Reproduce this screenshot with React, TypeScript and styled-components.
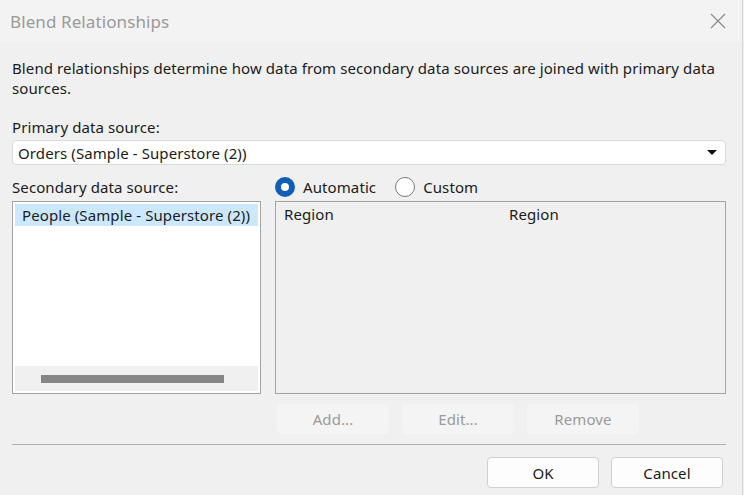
import React from 'react';
import styled, { createGlobalStyle } from 'styled-components';

const GlobalStyle = createGlobalStyle`
  html, body {
    margin: 0;
    padding: 0;
    background: #f0f0f0;
  }
  body {
    font-family: "Noto Sans", "DejaVu Sans", sans-serif;
    font-size: 15px;
    letter-spacing: 0.1px;
    color: #1b1b1b;
  }
  * {
    box-sizing: border-box;
  }
`;

const Window = styled.div`
  width: 743px;
  height: 495px;
  background: #f0f0f0;
  border-right: 1px solid #d6d6d6;
  display: flex;
  flex-direction: column;
  overflow: hidden;
`;

const TitleBar = styled.div`
  height: 42px;
  background: #f3f3f3;
  display: flex;
  align-items: center;
  justify-content: space-between;
  padding: 0 14px 0 10px;
`;

const Title = styled.div`
  font-size: 17px;
  color: #9a9a9a;
`;

const CloseButton = styled.div`
  width: 20px;
  height: 20px;
  display: flex;
  align-items: center;
  justify-content: center;
`;

const Body = styled.div`
  padding: 16px 16px 0 12px;
  display: flex;
  flex-direction: column;
`;

const Description = styled.p`
  margin: 0;
  line-height: 20px;
`;

const Label = styled.div`
  line-height: 20px;
`;

const PrimaryLabel = styled(Label)`
  margin-top: 19px;
`;

const Combo = styled.div`
  margin-top: 3px;
  height: 25px;
  background: #fff;
  border: 1px solid #d9d9d9;
  border-radius: 4px;
  display: flex;
  align-items: center;
  justify-content: space-between;
  padding: 0 8px 0 5px;
`;

const Arrow = styled.div`
  width: 0;
  height: 0;
  border-left: 5px solid transparent;
  border-right: 5px solid transparent;
  border-top: 5px solid #111;
`;

const Columns = styled.div`
  margin-top: 12px;
  display: grid;
  grid-template-columns: 249px 451px;
  column-gap: 14px;
`;

const Column = styled.div`
  display: flex;
  flex-direction: column;
`;

const ListBox = styled.div`
  margin-top: 4px;
  height: 193px;
  border: 1px solid #a3a3a3;
  background: #fff;
  display: flex;
  flex-direction: column;
  justify-content: space-between;
  padding: 2px;
`;

const ListItem = styled.div<{ selected?: boolean }>`
  height: 22px;
  line-height: 22px;
  padding-left: 7px;
  white-space: nowrap;
  overflow: hidden;
  background: ${(p) => (p.selected ? '#cce8ff' : 'transparent')};
`;

const HScroll = styled.div`
  height: 25px;
  background: #f0f0f0;
  display: flex;
  align-items: center;
  padding-left: 26px;
`;

const ScrollThumb = styled.div`
  width: 183px;
  height: 8px;
  background: #858585;
`;

const RadioRow = styled.div`
  display: flex;
  align-items: center;
  gap: 19px;
  height: 20px;
`;

const RadioOption = styled.label`
  display: flex;
  align-items: center;
  gap: 8px;
`;

const RadioCircle = styled.span<{ checked?: boolean }>`
  width: 20px;
  height: 20px;
  border-radius: 50%;
  background: #fff;
  border: ${(p) => (p.checked ? '6px solid #0e5fb5' : '1px solid #7a7a7a')};
`;

const MappingBox = styled.div`
  margin-top: 4px;
  height: 193px;
  border: 1px solid #a3a3a3;
  background: #f0f0f0;
  padding: 1px 8px;
`;

const MappingRow = styled.div`
  display: grid;
  grid-template-columns: 225px 1fr;
  line-height: 22px;
`;

const ActionRow = styled.div`
  margin-top: 10px;
  display: flex;
  gap: 13px;
  padding-left: 2px;
`;

const ActionButton = styled.div`
  width: 112px;
  height: 30px;
  border-radius: 4px;
  background: #f4f4f4;
  color: #9a9a9a;
  display: flex;
  align-items: center;
  justify-content: center;
`;

const Separator = styled.hr`
  margin: 10px 0 0;
  border: none;
  border-top: 1px solid #b0b0b0;
  width: 714px;
`;

const Footer = styled.div`
  margin-top: 12px;
  display: flex;
  justify-content: flex-end;
  gap: 12px;
  padding-right: 3px;
`;

const DialogButton = styled.div`
  width: 112px;
  height: 31px;
  border-radius: 4px;
  background: #fdfdfd;
  border: 1px solid #d0d0d0;
  display: flex;
  align-items: center;
  justify-content: center;
`;

const App: React.FC = () => {
  return (
    <>
      <GlobalStyle />
      <Window>
        <TitleBar>
          <Title>Blend Relationships</Title>
          <CloseButton>
            <svg width="16" height="16" viewBox="0 0 16 16">
              <path d="M1 1 L15 15 M15 1 L1 15" stroke="#8a8a8a" strokeWidth="1.2" />
            </svg>
          </CloseButton>
        </TitleBar>
        <Body>
          <Description>
            Blend relationships determine how data from secondary data sources are joined with primary data
            sources.
          </Description>

          <PrimaryLabel>Primary data source:</PrimaryLabel>
          <Combo>
            <span>Orders (Sample - Superstore (2))</span>
            <Arrow />
          </Combo>

          <Columns>
            <Column>
              <Label>Secondary data source:</Label>
              <ListBox>
                <ListItem selected>People (Sample - Superstore (2))</ListItem>
                <HScroll>
                  <ScrollThumb />
                </HScroll>
              </ListBox>
            </Column>
            <Column>
              <RadioRow>
                <RadioOption>
                  <RadioCircle checked />
                  Automatic
                </RadioOption>
                <RadioOption>
                  <RadioCircle />
                  Custom
                </RadioOption>
              </RadioRow>
              <MappingBox>
                <MappingRow>
                  <span>Region</span>
                  <span>Region</span>
                </MappingRow>
              </MappingBox>
              <ActionRow>
                <ActionButton>Add...</ActionButton>
                <ActionButton>Edit...</ActionButton>
                <ActionButton>Remove</ActionButton>
              </ActionRow>
            </Column>
          </Columns>

          <Separator />

          <Footer>
            <DialogButton>OK</DialogButton>
            <DialogButton>Cancel</DialogButton>
          </Footer>
        </Body>
      </Window>
    </>
  );
};

export default App;
